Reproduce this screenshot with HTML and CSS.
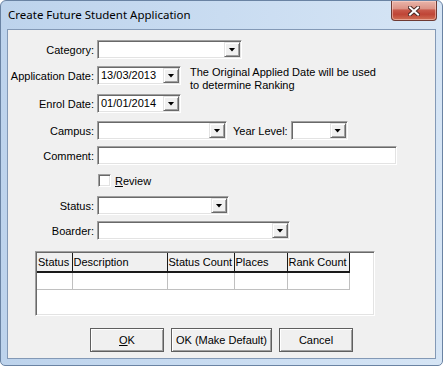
FILE: index.html
```html
<!DOCTYPE html>
<html lang="en">
<head>
    <meta charset="UTF-8">
    <title>Create Future Student Application</title>
    <link rel="stylesheet" href="styles.css">
</head>
<body>

    <div class="window">
        <div class="titlebar">
            <span class="title">Create Future Student Application</span>
            <button class="close-btn" aria-label="Close">
                <svg width="12" height="10" viewBox="0 0 12 10">
                    <path d="M2 1.5 L10 8.5 M10 1.5 L2 8.5" stroke="#4a2a26" stroke-width="4" stroke-linecap="square"/>
                    <path d="M2 1.5 L10 8.5 M10 1.5 L2 8.5" stroke="#ffffff" stroke-width="2" stroke-linecap="square"/>
                </svg>
            </button>
        </div>

        <div class="client">
            <div class="form">
                <div class="row">
                    <span class="field-label">Category:</span>
                    <div class="combo w-category"><span class="combo-text"></span><span class="drop"></span></div>
                </div>

                <div class="row row-appdate">
                    <span class="field-label">Application Date:</span>
                    <div class="combo w-date"><span class="combo-text">13/03/2013</span><span class="drop"></span></div>
                    <p class="note">The Original Applied Date will be used<br>to determine Ranking</p>
                </div>

                <div class="row row-enrol">
                    <span class="field-label">Enrol Date:</span>
                    <div class="combo w-date"><span class="combo-text">01/01/2014</span><span class="drop"></span></div>
                </div>

                <div class="row row-campus">
                    <span class="field-label">Campus:</span>
                    <div class="combo w-campus"><span class="combo-text"></span><span class="drop"></span></div>
                    <span class="inline-label">Year Level:</span>
                    <div class="combo w-year"><span class="combo-text"></span><span class="drop"></span></div>
                </div>

                <div class="row row-gap">
                    <span class="field-label">Comment:</span>
                    <div class="textbox w-comment"></div>
                </div>

                <div class="row row-gap">
                    <span class="checkbox"></span>
                    <span class="check-label"><u>R</u>eview</span>
                </div>

                <div class="row row-gap">
                    <span class="field-label">Status:</span>
                    <div class="combo w-status"><span class="combo-text"></span><span class="drop"></span></div>
                </div>

                <div class="row row-gap">
                    <span class="field-label">Boarder:</span>
                    <div class="combo w-boarder"><span class="combo-text"></span><span class="drop"></span></div>
                </div>
            </div>

            <div class="grid">
                <table class="grid-table">
                    <thead>
                        <tr>
                            <th class="c-status">Status</th>
                            <th class="c-desc">Description</th>
                            <th class="c-count">Status Count</th>
                            <th class="c-places">Places</th>
                            <th class="c-rank">Rank Count</th>
                        </tr>
                    </thead>
                    <tbody>
                        <tr>
                            <td></td><td></td><td></td><td></td><td></td>
                        </tr>
                    </tbody>
                </table>
            </div>

            <div class="buttons">
                <button class="btn btn-ok"><u>O</u>K</button>
                <button class="btn btn-default">OK (Make Default)</button>
                <button class="btn btn-cancel">Cancel</button>
            </div>
        </div>
    </div>

</body>
</html>
```

FILE: styles.css
```css
* {
    margin: 0;
    padding: 0;
    box-sizing: border-box;
}

body {
    background: #ffffff;
    font-family: 'Liberation Sans', Arial, sans-serif;
    font-size: 11px;
    color: #000000;
}

/* Window frame */
.window {
    width: 443px;
    height: 366px;
    border: 1px solid #6a83a3;
    border-radius: 6px 6px 5px 5px;
    background: linear-gradient(to right, #bdd3ec 0%, #c9dcf1 50%, #d6e5f5 100%);
    padding: 0 6px 6px 6px;
    display: flex;
    flex-direction: column;
}

.titlebar {
    height: 28px;
    display: flex;
    align-items: flex-start;
    justify-content: space-between;
}

.title {
    font-family: 'Noto Sans', 'Open Sans', sans-serif;
    font-size: 11.5px;
    margin-top: 6px;
    margin-left: 1px;
    color: #000;
}

.close-btn {
    width: 46px;
    height: 20px;
    margin-right: -1px;
    border: 1px solid #6e3a33;
    border-top: none;
    border-radius: 0 0 4px 4px;
    background: linear-gradient(to bottom, #e9b5aa 0%, #dc9386 40%, #c8594a 48%, #bf4536 70%, #d06f55 100%);
    box-shadow: inset 0 0 0 1px rgba(255, 220, 210, 0.5);
    display: flex;
    align-items: center;
    justify-content: center;
}

/* Client area */
.client {
    flex: 1;
    background: #f0f0f0;
    border: 1px solid #8399b6;
    display: flex;
    flex-direction: column;
}

.form {
    padding-top: 10px;
}

.row {
    display: flex;
    align-items: center;
    height: 19px;
}

.row-appdate { margin-top: 7px; }
.row-enrol { margin-top: 9px; }
.row-campus { margin-top: 8px; }
.row-gap { margin-top: 6px; }

.field-label {
    width: 86px;
    margin-right: 3px;
    text-align: right;
    white-space: nowrap;
}

.inline-label {
    margin-left: 6px;
    margin-right: 3px;
}

/* Sunken controls */
.combo,
.textbox {
    height: 19px;
    background: #ffffff;
    border: 1px solid;
    border-color: #a0a0a0 #ffffff #ffffff #a0a0a0;
    box-shadow: inset 1px 1px 0 #696969, inset -1px -1px 0 #e3e3e3;
}

.combo {
    display: flex;
    align-items: stretch;
    padding: 1px;
}

.combo-text {
    flex: 1;
    padding-left: 2px;
    line-height: 15px;
}

.drop {
    width: 16px;
    background: #f0f0f0;
    border: 1px solid;
    border-color: #e3e3e3 #696969 #696969 #e3e3e3;
    box-shadow: inset 1px 1px 0 #ffffff, inset -1px -1px 0 #a0a0a0;
    display: flex;
    align-items: center;
    justify-content: center;
}

.drop::after {
    content: "";
    width: 7px;
    height: 4px;
    background: #000;
    clip-path: polygon(0 0, 100% 0, 50% 100%);
}

.w-category { width: 145px; }
.w-date { width: 84px; }
.w-campus { width: 130px; }
.w-year { width: 57px; }
.w-comment { width: 300px; }
.w-status { width: 132px; }
.w-boarder { width: 193px; }

.note {
    align-self: flex-start;
    margin-left: 9px;
    line-height: 13px;
    white-space: nowrap;
}

.checkbox {
    width: 13px;
    height: 13px;
    margin-left: 90px;
    background: #ffffff;
    border: 1px solid;
    border-color: #a0a0a0 #ffffff #ffffff #a0a0a0;
    box-shadow: inset 1px 1px 0 #696969, inset -1px -1px 0 #e3e3e3;
}

.check-label {
    margin-left: 4px;
}

/* Grid */
.grid {
    width: 340px;
    height: 65px;
    margin: 11px 0 0 27px;
    background: #ffffff;
    border: 1px solid;
    border-color: #a0a0a0 #ffffff #ffffff #a0a0a0;
    box-shadow: inset 1px 1px 0 #696969, inset -1px -1px 0 #e3e3e3;
    padding: 1px 0 0 1px;
}

.grid-table {
    border-collapse: collapse;
    table-layout: fixed;
}

.grid-table th {
    height: 19px;
    background: #f0f0f0;
    font-weight: normal;
    text-align: left;
    padding: 0 0 0 1px;
    border-right: 1px solid #1a1a1a;
    border-bottom: 2px solid #1a1a1a;
    white-space: nowrap;
}

.grid-table td {
    height: 17px;
    border-right: 1px solid #c0c0c0;
    border-bottom: 1px solid #c0c0c0;
}

.c-status { width: 35px; }
.c-desc { width: 95px; }
.c-count { width: 67px; }
.c-places { width: 53px; }
.c-rank { width: 62px; }

/* Buttons */
.buttons {
    margin-top: 12px;
    display: flex;
    justify-content: center;
    gap: 7px;
}

.btn {
    height: 24px;
    font-family: 'Liberation Sans', Arial, sans-serif;
    font-size: 11px;
    color: #000;
    background: #f0f0f0;
    border: 1px solid #5f5f5f;
    box-shadow: inset 1px 1px 0 #ffffff, inset -1px -1px 0 #a0a0a0;
}

.btn-ok { width: 74px; }
.btn-default { width: 101px; }
.btn-cancel { width: 74px; }
```
